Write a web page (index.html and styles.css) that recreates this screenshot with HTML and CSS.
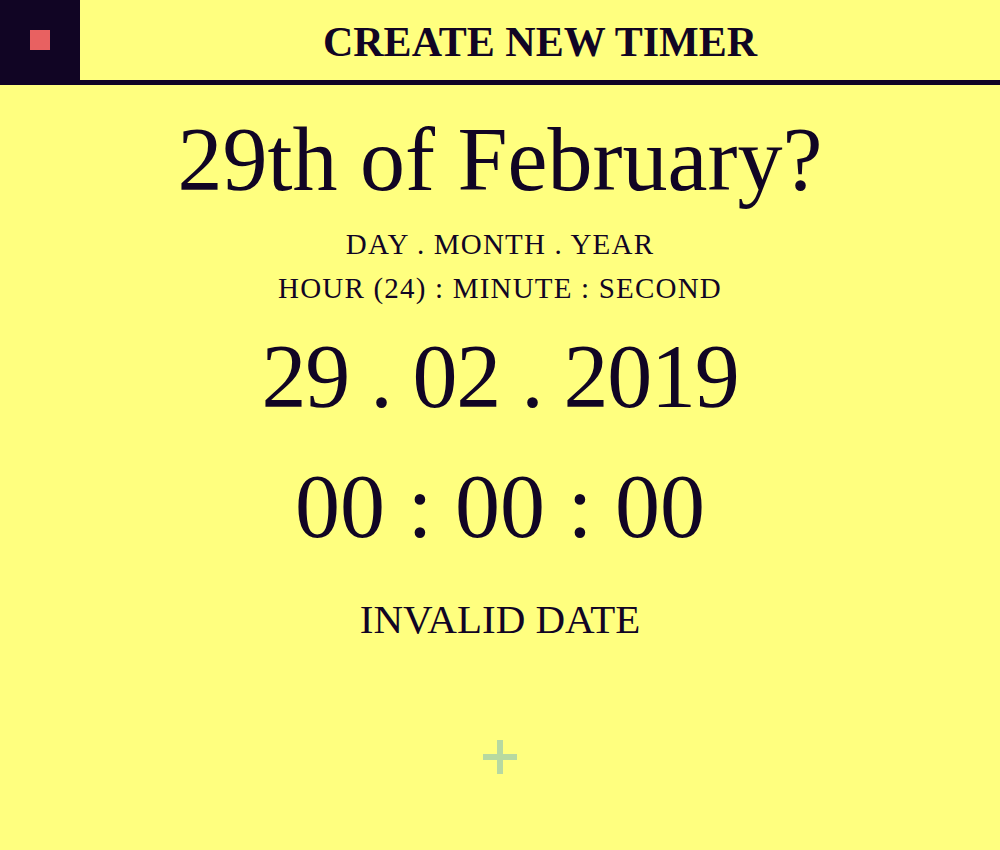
FILE: index.html
```html
<!DOCTYPE html>
<html lang="en">
<head>
<meta charset="utf-8">
<title>Create new timer</title>
<link rel="stylesheet" href="styles.css">
</head>
<body>
<header class="topbar">
  <div class="menu-box"><span class="menu-square"></span></div>
  <h1 class="topbar-title">CREATE NEW TIMER</h1>
</header>
<main class="content">
  <h2 class="headline">29th of February?</h2>
  <p class="hint">DAY . MONTH . YEAR</p>
  <p class="hint">HOUR (24) : MINUTE : SECOND</p>
  <p class="big date">29 . 02 . 2019</p>
  <p class="big time">00 : 00 : 00</p>
  <p class="status">INVALID DATE</p>
  <div class="add"><span class="plus"></span></div>
</main>
</body>
</html>
```
FILE: styles.css
```css
html, body {
  margin: 0;
  padding: 0;
}
body {
  background: #ffff7f;
  color: #110524;
  font-family: "Liberation Serif", "Times New Roman", serif;
  height: 850px;
  overflow: hidden;
}
.topbar {
  display: flex;
  height: 80px;
  border-bottom: 5px solid #110524;
}
.menu-box {
  width: 80px;
  height: 80px;
  background: #110524;
  display: flex;
  align-items: center;
  justify-content: center;
}
.menu-square {
  width: 20px;
  height: 20px;
  background: #e86161;
}
.topbar-title {
  flex: 1;
  margin: 0;
  text-align: center;
  font-size: 42px;
  font-weight: bold;
  line-height: 84px;
}
.content {
  display: flex;
  flex-direction: column;
  align-items: center;
  text-align: center;
}
.headline {
  margin: 25px 0 0;
  font-size: 90px;
  font-weight: normal;
  line-height: 100px;
}
.hint {
  margin: 0;
  font-size: 29px;
  letter-spacing: 1.2px;
  line-height: 44px;
}
.hint:first-of-type {
  margin-top: 12px;
}
.big {
  margin: 0;
  font-size: 90px;
  line-height: 130px;
}
.date {
  margin-top: 2px;
  letter-spacing: -1.3px;
}
.status {
  margin: 22px 0 0;
  font-size: 41px;
  line-height: 50px;
}
.add {
  margin-top: 96px;
  width: 34px;
  height: 34px;
  position: relative;
}
.plus::before,
.plus::after {
  content: "";
  position: absolute;
  background: #b7d9a1;
}
.plus::before {
  left: 0;
  right: 0;
  top: 14px;
  height: 6px;
}
.plus::after {
  top: 0;
  bottom: 0;
  left: 14px;
  width: 6px;
}
```
